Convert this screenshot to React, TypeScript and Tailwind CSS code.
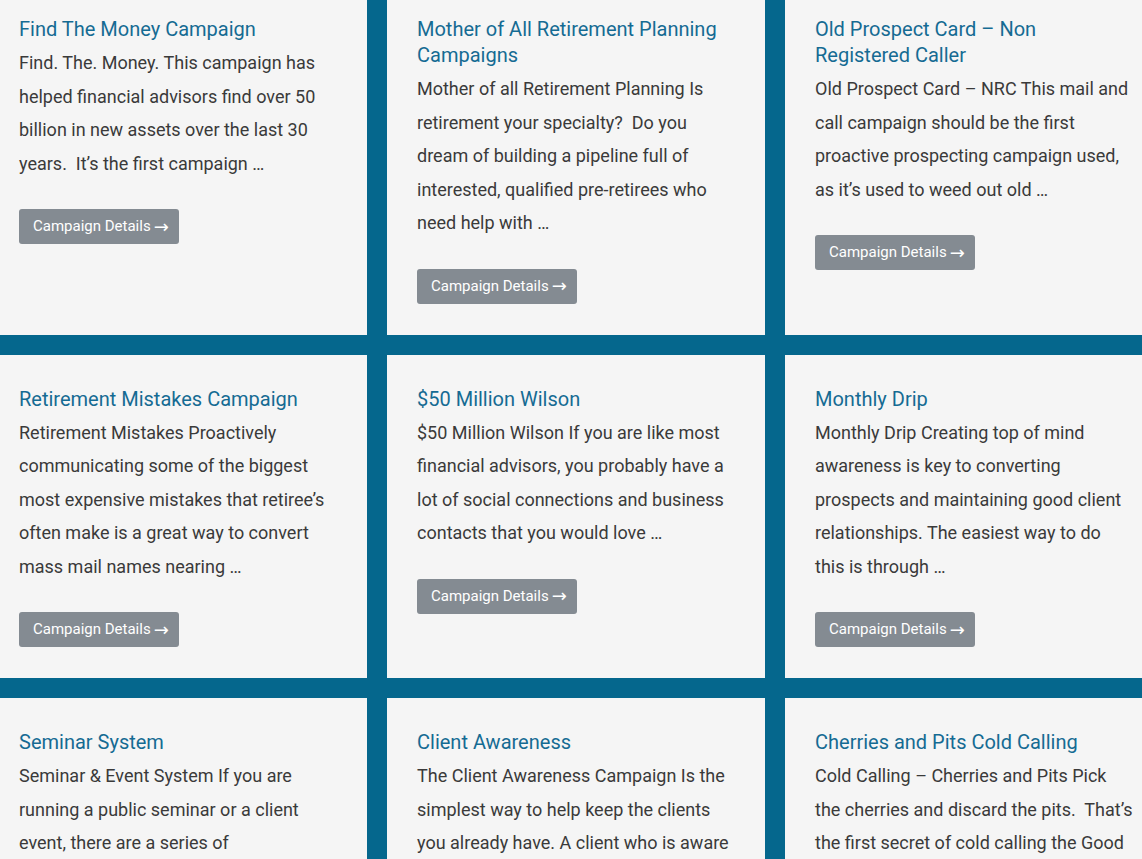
import React from "react";

const cards = [
  {
    title: "Find The Money Campaign",
    text: "Find. The. Money. This campaign has helped financial advisors find over 50 billion in new assets over the last 30 years.\u00a0 It’s the first campaign …",
  },
  {
    title: "Mother of All Retirement Planning Campaigns",
    text: "Mother of all Retirement Planning Is retirement your specialty?\u00a0 Do you dream of building a pipeline full of interested, qualified pre-retirees who need help with …",
  },
  {
    title: "Old Prospect Card – Non Registered Caller",
    text: "Old Prospect Card – NRC This mail and call campaign should be the first proactive prospecting campaign used, as it’s used to weed out old …",
  },
  {
    title: "Retirement Mistakes Campaign",
    text: "Retirement Mistakes Proactively communicating some of the biggest most expensive mistakes that retiree’s often make is a great way to convert mass mail names nearing …",
  },
  {
    title: "$50 Million Wilson",
    text: "$50 Million Wilson If you are like most financial advisors, you probably have a lot of social connections and business contacts that you would love …",
  },
  {
    title: "Monthly Drip",
    text: "Monthly Drip Creating top of mind awareness is key to converting prospects and maintaining good client relationships. The easiest way to do this is through …",
  },
  {
    title: "Seminar System",
    text: "Seminar & Event System If you are running a public seminar or a client event, there are a series of considerations …",
  },
  {
    title: "Client Awareness",
    text: "The Client Awareness Campaign Is the simplest way to help keep the clients you already have. A client who is aware of everything you do …",
  },
  {
    title: "Cherries and Pits Cold Calling",
    text: "Cold Calling – Cherries and Pits Pick the cherries and discard the pits.\u00a0 That’s the first secret of cold calling the Good …",
  },
];

export default function App() {
  return (
    <div
      className="w-full h-[859px] overflow-hidden bg-[#05678d]"
      style={{ fontFamily: "Roboto, 'Liberation Sans', sans-serif" }}
    >
      <div className="grid grid-cols-3 gap-5 w-[1174px] ml-[-11px] mt-[-15px]">
        {cards.map((c) => (
          <div key={c.title} className="bg-[#f5f5f5] pt-[31px] pb-[31px] px-[30px] flex flex-col items-start">
            <h3 className="text-[20px] leading-[26px] text-[#156b93] font-normal">{c.title}</h3>
            <p className="mt-[4px] text-[18px] leading-[33.5px] text-[#3a3a3a]">{c.text}</p>
            <button className="mt-[29px] h-[35px] pl-[14px] pr-[10px] rounded-[3px] bg-[#848b92] text-white text-[15px] flex items-center">
              <span>Campaign Details</span>
              <span className="ml-[3px] text-[18px] leading-none font-['DejaVu_Sans']">→</span>
            </button>
          </div>
        ))}
      </div>
    </div>
  );
}
